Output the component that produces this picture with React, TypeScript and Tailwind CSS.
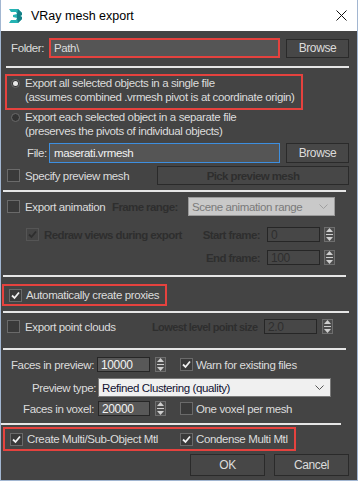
import React from 'react'

const font = { fontFamily: '"Liberation Sans", Arial, sans-serif' }

function Sep({ w, ml, mt }: { w: string; ml: string; mt: string }) {
  return <div className={`h-[2px] bg-[#e6e6e6] ${w} ${ml} ${mt}`} />
}

function Check({ checked, disabled }: { checked?: boolean; disabled?: boolean }) {
  return (
    <div
      className={`w-[13px] h-[13px] shrink-0 border flex items-center justify-center ${
        disabled ? 'border-[#555] bg-[#444]' : 'border-[#6a6a6a] bg-[#3a3a3a]'
      }`}
    >
      {checked && (
        <svg width="9" height="9" viewBox="0 0 9 9">
          <path
            d="M1 4.5 L3.5 7 L8 1.5"
            fill="none"
            stroke={disabled ? '#2e2e2e' : '#f0f0f0'}
            strokeWidth="1.8"
          />
        </svg>
      )}
    </div>
  )
}

function Radio({ on }: { on?: boolean }) {
  return (
    <div className="w-[9px] h-[9px] rounded-full border border-[#6a6a6a] bg-[#333] flex items-center justify-center shrink-0">
      {on && <div className="w-[5px] h-[5px] rounded-full bg-[#e8e8e8]" />}
    </div>
  )
}

function Spinner() {
  return (
    <div className="w-[11px] h-[15px] border border-[#6e6e6e] bg-[#4c4c4c] flex flex-col items-center justify-center gap-[2px] shrink-0">
      <svg width="7" height="4" viewBox="0 0 7 4">
        <path d="M0 4 L3.5 0 L7 4 Z" fill="#cfcfcf" />
      </svg>
      <div className="w-[7px] h-px bg-[#cfcfcf]" />
      <svg width="7" height="4" viewBox="0 0 7 4">
        <path d="M0 0 L3.5 4 L7 0 Z" fill="#cfcfcf" />
      </svg>
    </div>
  )
}

function NumBox({ value, w, disabled }: { value: string; w: string; disabled?: boolean }) {
  return (
    <div
      className={`${w} h-[15px] border border-[#262626] flex items-center pl-[3px] text-[12px] shrink-0 ${
        disabled ? 'bg-[#474747] text-[#2e2e2e]' : 'bg-[#585858] text-[#f2f2f2]'
      }`}
    >
      {value}
    </div>
  )
}

function Btn({ label, w, h }: { label: string; w: string; h: string }) {
  return (
    <div
      className={`${w} ${h} border border-[#2a2a2a] bg-[#474747] flex items-center justify-center text-[12px] text-[#dcdcdc] shrink-0`}
    >
      {label}
    </div>
  )
}

const dis = 'font-bold text-[#2e2e2e] tracking-[-0.6px]'

export default function App() {
  return (
    <div
      className="w-[358px] h-[481px] border-l border-r border-b border-[#a2b6d1] bg-[#444444] flex flex-col text-[#dcdcdc] text-[11.5px] tracking-[-0.38px] leading-[14px] whitespace-nowrap overflow-hidden"
      style={font}
    >
      {/* Title bar */}
      <div className="h-[31px] bg-white flex items-center shrink-0 tracking-normal">
        <svg className="ml-[8px]" width="14" height="14" viewBox="0 0 14 14">
          <path d="M0 0 H9 L13 4 V6 L11 7 L13 8 V10 L9 14 H0 L2 11 H7 L8 9 L4 8 V6 L8 5 L7 3 H2 Z" fill="#25b3b3" />
          <path d="M9 0 L13 4 V6 L11 7 L13 8 V10 L9 14 L8 9 L8 5 Z" fill="#157f86" />
        </svg>
        <span className="ml-[8px] text-[12.5px] text-black">VRay mesh export</span>
        <svg className="ml-auto mr-[10px]" width="11" height="11" viewBox="0 0 11 11">
          <path d="M0.5 0.5 L10.5 10.5 M10.5 0.5 L0.5 10.5" stroke="#111" strokeWidth="1" />
        </svg>
      </div>

      {/* Folder */}
      <div className="flex items-center h-[20px] mt-[7px] shrink-0">
        <span className="ml-[10px] w-[38px]">Folder:</span>
        <div className="w-[231px] h-[20px] border-2 border-[#e5423e] bg-[#555555] flex items-center pl-[3px]">
          Path\
        </div>
        <div className="ml-[6px]">
          <Btn label="Browse" w="w-[63px]" h="h-[19px]" />
        </div>
      </div>

      <Sep w="w-[343px]" ml="ml-[5px]" mt="mt-[8px]" />

      {/* Radio 1 */}
      <div className="ml-[4px] mt-[6px] w-[298px] h-[36px] border-2 border-[#e5423e] flex shrink-0">
        <div className="pt-[3px] pl-[4px]">
          <Radio on />
        </div>
        <div className="ml-[5px] leading-[14px]">
          <div>Export all selected objects in a single file</div>
          <div>(assumes combined .vrmesh pivot is at coordinate origin)</div>
        </div>
      </div>

      {/* Radio 2 */}
      <div className="ml-[4px] flex shrink-0">
        <div className="pt-[3px] pl-[6px]">
          <Radio />
        </div>
        <div className="ml-[5px] leading-[14px]">
          <div>Export each selected object in a separate file</div>
          <div>(preserves the pivots of individual objects)</div>
        </div>
      </div>

      {/* File */}
      <div className="flex items-center h-[20px] mt-[5px] shrink-0">
        <span className="ml-[26px] w-[22px]">File:</span>
        <div className="w-[231px] h-[20px] border border-[#3d8fe0] bg-[#555555] flex items-center pl-[4px] text-[#f2f2f2]">
          maserati.vrmesh
        </div>
        <div className="ml-[6px]">
          <Btn label="Browse" w="w-[63px]" h="h-[20px]" />
        </div>
      </div>

      {/* Specify preview mesh */}
      <div className="flex items-center h-[19px] mt-[3px] shrink-0">
        <div className="ml-[6px]">
          <Check />
        </div>
        <span className="ml-[5px] w-[132px]">Specify preview mesh</span>
        <div className={`w-[192px] h-[19px] border border-[#2a2a2a] bg-[#474747] flex items-center justify-center ${dis}`}>
          Pick preview mesh
        </div>
      </div>

      <Sep w="w-[343px]" ml="ml-[2px]" mt="mt-[5px]" />

      {/* Export animation */}
      <div className="flex items-center h-[19px] mt-[5px] shrink-0">
        <div className="ml-[6px]">
          <Check />
        </div>
        <span className="ml-[5px] w-[87px]">Export animation</span>
        <span className={`w-[76px] ${dis}`}>Frame range:</span>
        <div className="w-[147px] h-[19px] border border-[#9a9a9a] bg-[#c9c9c9] flex items-center pl-[3px] text-[#7a7a7a]">
          <span>Scene animation range</span>
          <svg className="ml-auto mr-[6px]" width="9" height="5" viewBox="0 0 9 5">
            <path d="M0.5 0.5 L4.5 4.5 L8.5 0.5" fill="none" stroke="#a0a0a0" strokeWidth="1" />
          </svg>
        </div>
      </div>

      {/* Redraw / Start frame */}
      <div className="flex items-center h-[15px] mt-[11px] shrink-0">
        <div className="ml-[25px]">
          <Check checked disabled />
        </div>
        <span className={`ml-[5px] ${dis}`}>Redraw views during export</span>
        <span className={`ml-auto w-[80px] text-right ${dis}`}>Start frame:</span>
        <div className="ml-[7px]">
          <NumBox value="0" w="w-[53px]" disabled />
        </div>
        <div className="ml-[4px] mr-[22px]">
          <Spinner />
        </div>
      </div>

      {/* End frame */}
      <div className="flex items-center h-[15px] mt-[8px] shrink-0">
        <span className={`ml-auto w-[80px] text-right ${dis}`}>End frame:</span>
        <div className="ml-[7px]">
          <NumBox value="100" w="w-[53px]" disabled />
        </div>
        <div className="ml-[4px] mr-[22px]">
          <Spinner />
        </div>
      </div>

      <Sep w="w-[343px]" ml="ml-[2px]" mt="mt-[10px]" />

      {/* Automatically create proxies */}
      <div className="ml-[1px] mt-[7px] w-[165px] h-[22px] border-2 border-[#e5423e] flex items-center shrink-0">
        <div className="ml-[5px]">
          <Check checked />
        </div>
        <span className="ml-[4px]">Automatically create proxies</span>
      </div>

      <Sep w="w-[346px]" ml="ml-[2px]" mt="mt-[5px]" />

      {/* Point clouds */}
      <div className="flex items-center h-[15px] mt-[6px] shrink-0">
        <div className="ml-[6px]">
          <Check />
        </div>
        <span className="ml-[5px] w-[127px]">Export point clouds</span>
        <span className={`w-[112px] ${dis} text-[11px]`}>Lowest level point size</span>
        <NumBox value="2.0" w="w-[53px]" disabled />
        <div className="ml-[5px]">
          <Spinner />
        </div>
      </div>

      <Sep w="w-[343px]" ml="ml-[2px]" mt="mt-[14px]" />

      {/* Faces in preview */}
      <div className="flex items-center h-[15px] mt-[7px] shrink-0">
        <span className="w-[93px] text-right">Faces in preview:</span>
        <div className="ml-[3px]">
          <NumBox value="10000" w="w-[53px]" />
        </div>
        <div className="ml-[5px]">
          <Spinner />
        </div>
        <div className="ml-[14px]">
          <Check checked />
        </div>
        <span className="ml-[3px]">Warn for existing files</span>
      </div>

      {/* Preview type */}
      <div className="flex items-center h-[19px] mt-[6px] shrink-0">
        <span className="w-[95px] text-right">Preview type:</span>
        <div className="ml-[2px] w-[233px] h-[19px] border border-[#7a7a7a] bg-[#f0f0f0] flex items-center pl-[3px] text-[#101030]">
          <span>Refined Clustering (quality)</span>
          <svg className="ml-auto mr-[6px]" width="9" height="5" viewBox="0 0 9 5">
            <path d="M0.5 0.5 L4.5 4.5 L8.5 0.5" fill="none" stroke="#555" strokeWidth="1" />
          </svg>
        </div>
      </div>

      {/* Faces in voxel */}
      <div className="flex items-center h-[15px] mt-[4px] shrink-0">
        <span className="w-[93px] text-right">Faces in voxel:</span>
        <div className="ml-[4px]">
          <NumBox value="20000" w="w-[52px]" />
        </div>
        <div className="ml-[5px]">
          <Spinner />
        </div>
        <div className="ml-[14px]">
          <Check />
        </div>
        <span className="ml-[3px]">One voxel per mesh</span>
      </div>

      <Sep w="w-[340px]" ml="ml-0" mt="mt-[7px]" />

      {/* Multi mtl */}
      <div className="ml-[2px] mt-[2px] w-[293px] h-[24px] border-2 border-[#e5423e] flex items-center shrink-0">
        <div className="ml-[5px]">
          <Check checked />
        </div>
        <span className="ml-[4px] w-[153px]">Create Multi/Sub-Object Mtl</span>
        <Check checked />
        <span className="ml-[3px]">Condense Multi Mtl</span>
      </div>

      {/* Buttons */}
      <div className="flex items-center h-[22px] mt-[3px] shrink-0">
        <div className="ml-[189px]">
          <Btn label="OK" w="w-[75px]" h="h-[22px]" />
        </div>
        <div className="ml-[9px]">
          <Btn label="Cancel" w="w-[75px]" h="h-[22px]" />
        </div>
      </div>
    </div>
  )
}
